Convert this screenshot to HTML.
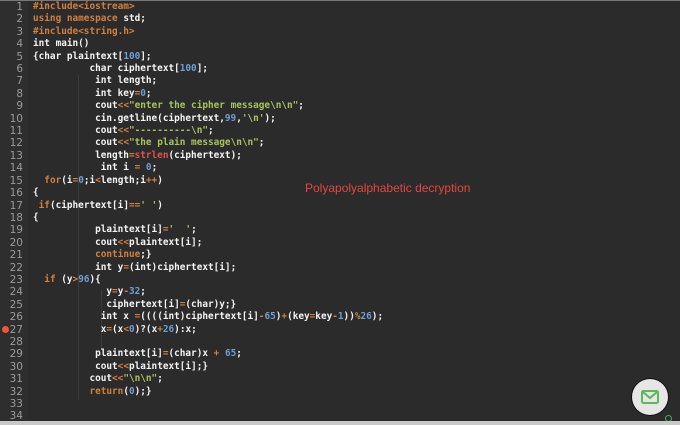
<!DOCTYPE html>
<html><head><meta charset="utf-8"><style>
html,body{margin:0;padding:0;width:680px;height:425px;overflow:hidden;background:#2b2b2b}
#top{position:absolute;left:0;top:0;width:680px;height:1px;background:#777}
#bot{position:absolute;left:0;top:421px;width:680px;height:4px;background:#c9c9c9}
#gut{position:absolute;left:0;top:1px;width:28px;height:420px;background:#2e2e2e}
pre{margin:0;position:absolute;top:1px;font-family:"DejaVu Sans Mono",monospace;font-size:9.4px;line-height:12.4px;color:#f4f4f4}
#code{font-weight:bold}
#nums{left:0;width:23px;text-align:right;color:#9a9a9a;font-family:"DejaVu Sans",sans-serif;font-size:10.5px}
#code{left:33px}
.k{color:#d0803f}.n{color:#6d9fd3}.s{color:#a9c25f}.r{color:#e0524c}.o{color:#d0803f}
#dot{position:absolute;left:2px;top:326px;width:7px;height:7px;border-radius:50%;background:#e8583a}
.g{position:absolute;width:1px;background:#3c3c3c}
#red{position:absolute;left:305px;top:181px;font-family:"Liberation Sans",sans-serif;font-size:12px;color:#e4463f}
#mail{position:absolute;left:632px;top:379px;width:36px;height:36px;border-radius:50%;background:#e6e6e6;box-shadow:0 0 0 1px #111}
#gd{position:absolute;left:665px;top:415px;width:5px;height:5px;border-radius:50%;border:1.5px solid #4caf50}
</style></head><body>
<div id="top"></div><div id="gut"></div>
<div class="g" style="left:78px;top:75px;height:325px"></div>
<div class="g" style="left:101px;top:290px;height:60px"></div>
<pre id="nums">1
2
3
4
5
6
7
8
9
10
11
12
13
14
15
16
17
18
19
20
21
22
23
24
25
26
27
28
29
30
31
32
33
34</pre>
<div id="dot"></div>
<pre id="code"><span class="k">#include&lt;iostream&gt;</span>
<span class="k">using namespace</span> std;
<span class="k">#include&lt;string.h&gt;</span>
int main()
{char plaintext[<span class="n">100</span>];
          char ciphertext[<span class="n">100</span>];
           int length;
           int key<span class="o">=</span><span class="n">0</span>;
           cout<span class="o">&lt;&lt;</span><span class="s">"enter the cipher message\n\n"</span>;
           cin.getline(ciphertext,<span class="n">99</span>,<span class="s">'\n'</span>);
           cout<span class="o">&lt;&lt;</span><span class="s">"----------\n"</span>;
           cout<span class="o">&lt;&lt;</span><span class="s">"the plain message\n\n"</span>;
           length<span class="o">=</span><span class="r">strlen</span>(ciphertext);
            int i <span class="o">=</span> <span class="n">0</span>;
  <span class="k">for</span>(i<span class="o">=</span><span class="n">0</span>;i<span class="o">&lt;</span>length;i<span class="o">++</span>)
{
 <span class="k">if</span>(ciphertext[i]<span class="o">==</span><span class="s">' '</span>)
{
           plaintext[i]<span class="o">=</span><span class="s">'  '</span>;
           cout<span class="o">&lt;&lt;</span>plaintext[i];
           <span class="k">continue</span>;}
           int y<span class="o">=</span>(int)ciphertext[i];
  <span class="k">if</span> (y<span class="o">&gt;</span><span class="n">96</span>){
             y<span class="o">=</span>y<span class="o">-</span><span class="n">32</span>;
             ciphertext[i]<span class="o">=</span>(char)y;}
            int x <span class="o">=</span>((((int)ciphertext[i]<span class="o">-</span><span class="n">65</span>)<span class="o">+</span>(key<span class="o">=</span>key<span class="o">-</span><span class="n">1</span>))<span class="o">%</span><span class="n">26</span>);
            x<span class="o">=</span>(x<span class="o">&lt;</span><span class="n">0</span>)?(x<span class="o">+</span><span class="n">26</span>):x;

           plaintext[i]<span class="o">=</span>(char)x <span class="o">+</span> <span class="n">65</span>;
           cout<span class="o">&lt;&lt;</span>plaintext[i];}
          cout<span class="o">&lt;&lt;</span><span class="s">"\n\n"</span>;
          <span class="k">return</span>(<span class="n">0</span>);}

</pre>
<div id="red">Polyapolyalphabetic decryption</div>
<div id="mail"><svg width="36" height="36" viewBox="0 0 36 36"><rect x="10" y="12" width="16" height="12" rx="1.5" fill="none" stroke="#5cb85c" stroke-width="2"/><path d="M11 13 L18 19 L25 13" fill="none" stroke="#5cb85c" stroke-width="2"/></svg></div>
<div id="gd"></div>
<div id="bot"></div>
</body></html>
